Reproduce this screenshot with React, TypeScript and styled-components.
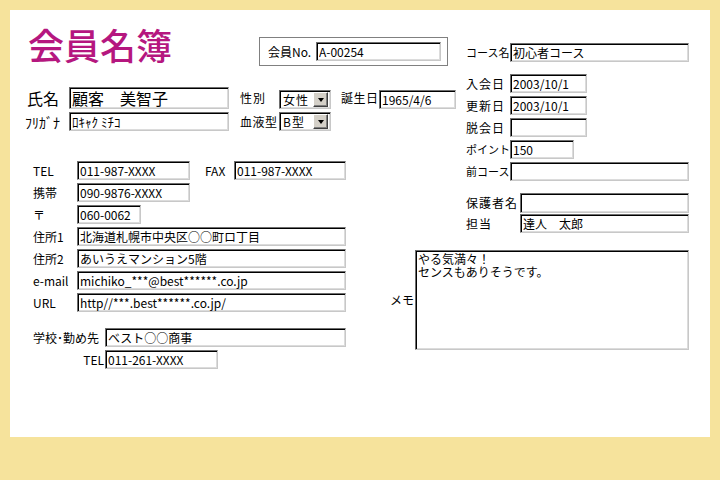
import React from "react";
import styled, { createGlobalStyle, css } from "styled-components";

const GlobalStyle = createGlobalStyle`
  html, body { margin: 0; padding: 0; }
  body {
    background: #f6e39c;
    font-family: "Noto Sans CJK JP", "Liberation Sans", sans-serif;
    font-size: 12px;
    color: #000;
  }
`;

const inset = css`
  box-sizing: border-box;
  border-style: solid;
  border-width: 1px;
  border-color: #6e6e6e #c8c8c8 #c8c8c8 #6e6e6e;
  box-shadow: inset 1px 1px 0 #000, inset -1px -1px 0 #dcdcdc;
  background: #fff;
`;

const Panel = styled.main`
  margin: 10px;
  width: 700px;
  height: 427px;
  background: #fff;
  display: flex;
  flex-direction: column;
`;

const Header = styled.header`
  display: flex;
  align-items: flex-start;
  height: 60px;
  padding-left: 18px;
`;

const Title = styled.h1`
  margin: 16px 0 0;
  width: 231px;
  font-size: 36px;
  line-height: 36px;
  font-weight: 500;
  color: #b5177f;
  letter-spacing: 0;
  white-space: nowrap;
`;

const MemberBox = styled.div`
  margin-top: 27px;
  width: 189px;
  height: 29px;
  box-sizing: border-box;
  border: 1px solid #808080;
  display: flex;
  align-items: center;
  padding-left: 8px;
`;

const CourseField = styled.div`
  margin: 33px 0 0 18px;
  display: flex;
  align-items: center;
`;

const Body = styled.div`
  display: grid;
  grid-template-columns: 370px 86px 244px;
  grid-template-rows: 86px 88px 1fr;
  grid-template-areas:
    "names names dates"
    "contact . dates"
    "contact memo memo";
  flex: 1;
`;

const Area = styled.section<{ $area: string; $pt: number; $pl: number }>`
  grid-area: ${(p) => p.$area};
  padding-top: ${(p) => p.$pt}px;
  padding-left: ${(p) => p.$pl}px;
  display: flex;
  flex-direction: column;
`;

const Row = styled.div<{ $mt?: number; $align?: string }>`
  display: flex;
  align-items: ${(p) => p.$align ?? "center"};
  margin-top: ${(p) => p.$mt ?? 0}px;
`;

const Label = styled.span<{ $w: number; $size?: number; $ls?: number; $right?: boolean; $ml?: number; $pl?: number }>`
  width: ${(p) => p.$w}px;
  flex-shrink: 0;
  box-sizing: border-box;
  margin-left: ${(p) => p.$ml ?? 0}px;
  padding-left: ${(p) => p.$pl ?? 0}px;
  font-size: ${(p) => p.$size ?? 12}px;
  letter-spacing: ${(p) => p.$ls ?? 0}px;
  text-align: ${(p) => (p.$right ? "right" : "left")};
  line-height: 1;
  white-space: nowrap;
  align-self: center;
`;

const TextBox = styled.input<{ $w: number; $h?: number; $size?: number; $ml?: number }>`
  ${inset};
  width: ${(p) => p.$w}px;
  height: ${(p) => p.$h ?? 19}px;
  padding: 0 2px;
  margin: 0 0 0 ${(p) => p.$ml ?? 0}px;
  font-family: "Noto Sans CJK JP", "Liberation Sans", sans-serif;
  font-size: ${(p) => p.$size ?? 12}px;
  color: #000;
  outline: none;
  flex-shrink: 0;
`;

const MemoBox = styled.textarea`
  ${inset};
  width: 274px;
  height: 100px;
  margin: 0;
  padding: 1px 2px;
  resize: none;
  overflow: hidden;
  font-family: "Noto Sans CJK JP", "Liberation Sans", sans-serif;
  font-size: 12px;
  line-height: 13px;
  color: #000;
  outline: none;
`;

const SelectBox = styled.div<{ $w: number }>`
  ${inset};
  width: ${(p) => p.$w}px;
  height: 19px;
  display: flex;
  align-items: center;
  justify-content: space-between;
  padding: 2px 2px 2px 3px;
  font-size: 12px;
  letter-spacing: 1px;
  line-height: 1;
  flex-shrink: 0;
`;

const DropButton = styled.span`
  box-sizing: border-box;
  width: 15px;
  height: 15px;
  background: #d4d0c8;
  border-style: solid;
  border-width: 1px;
  border-color: #fff #404040 #404040 #fff;
  box-shadow: inset -1px -1px 0 #808080;
  display: flex;
  align-items: center;
  justify-content: center;
  &::after {
    content: "";
    width: 0;
    height: 0;
    border-left: 3.5px solid transparent;
    border-right: 3.5px solid transparent;
    border-top: 4px solid #000;
  }
`;

const Select = ({ value, w }: { value: string; w: number }) => (
  <SelectBox $w={w} role="combobox">
    <span>{value}</span>
    <DropButton />
  </SelectBox>
);

const Memo = styled.div`
  display: flex;
  align-items: center;
`;

export default function App() {
  return (
    <>
      <GlobalStyle />
      <Panel>
        <Header>
          <Title>会員名簿</Title>
          <MemberBox>
            <Label $w={48} $size={12}>会員No.</Label>
            <TextBox $w={125} readOnly defaultValue="A-00254" />
          </MemberBox>
          <CourseField>
            <Label $w={44} $size={11}>コース名</Label>
            <TextBox $w={179} readOnly defaultValue="初心者コース" />
          </CourseField>
        </Header>
        <Body>
          <Area $area="names" $pt={17} $pl={15}>
            <Row $align="flex-end">
              <Label $w={44} $size={16} $pl={2}>氏名</Label>
              <TextBox $w={160} $h={22} $size={16} readOnly defaultValue="顧客　美智子" />
              <Label $w={39} $ml={11} $ls={1}>性別</Label>
              <Select value="女性" w={52} />
              <Label $w={38} $ml={10} $ls={0.5}>誕生日</Label>
              <TextBox $w={77} readOnly defaultValue="1965/4/6" />
            </Row>
            <Row $mt={3}>
              <Label $w={44} $size={14}>ﾌﾘｶﾞﾅ</Label>
              <TextBox $w={160} $size={13} readOnly defaultValue="ﾛｷｬｸ ﾐﾁｺ" />
              <Label $w={39} $ml={11} $ls={0.5}>血液型</Label>
              <Select value="B型" w={52} />
            </Row>
          </Area>
          <Area $area="dates" $pt={4} $pl={0}>
            <Row>
              <Label $w={44} $ls={1}>入会日</Label>
              <TextBox $w={77} readOnly defaultValue="2003/10/1" />
            </Row>
            <Row $mt={3}>
              <Label $w={44} $ls={1}>更新日</Label>
              <TextBox $w={77} readOnly defaultValue="2003/10/1" />
            </Row>
            <Row $mt={3}>
              <Label $w={44} $ls={1}>脱会日</Label>
              <TextBox $w={77} readOnly defaultValue="" />
            </Row>
            <Row $mt={3}>
              <Label $w={44} $size={11}>ポイント</Label>
              <TextBox $w={64} readOnly defaultValue="150" />
            </Row>
            <Row $mt={3}>
              <Label $w={44} $size={11}>前コース</Label>
              <TextBox $w={179} readOnly defaultValue="" />
            </Row>
            <Row $mt={12}>
              <Label $w={54} $ls={1}>保護者名</Label>
              <TextBox $w={169} $h={20} readOnly defaultValue="" />
            </Row>
            <Row $mt={1}>
              <Label $w={54} $ls={1}>担当</Label>
              <TextBox $w={169} readOnly defaultValue="達人　太郎" />
            </Row>
          </Area>
          <Area $area="contact" $pt={5} $pl={23}>
            <Row>
              <Label $w={44}>TEL</Label>
              <TextBox $w={113} readOnly defaultValue="011-987-XXXX" />
              <Label $w={29} $ml={15}>FAX</Label>
              <TextBox $w={112} readOnly defaultValue="011-987-XXXX" />
            </Row>
            <Row $mt={3}>
              <Label $w={44}>携帯</Label>
              <TextBox $w={113} readOnly defaultValue="090-9876-XXXX" />
            </Row>
            <Row $mt={3}>
              <Label $w={44}>〒</Label>
              <TextBox $w={64} readOnly defaultValue="060-0062" />
            </Row>
            <Row $mt={3}>
              <Label $w={44}>住所1</Label>
              <TextBox $w={269} readOnly defaultValue="北海道札幌市中央区○○町ロ丁目" />
            </Row>
            <Row $mt={3}>
              <Label $w={44}>住所2</Label>
              <TextBox $w={269} readOnly defaultValue="あいうえマンション5階" />
            </Row>
            <Row $mt={3}>
              <Label $w={44}>e-mail</Label>
              <TextBox $w={269} readOnly defaultValue="michiko_***@best******.co.jp" />
            </Row>
            <Row $mt={3}>
              <Label $w={44}>URL</Label>
              <TextBox $w={269} readOnly defaultValue="http//***.best******.co.jp/" />
            </Row>
            <Row $mt={16}>
              <Label $w={72}>学校･勤め先</Label>
              <TextBox $w={241} readOnly defaultValue="ベスト○○商事" />
            </Row>
            <Row $mt={3}>
              <Label $w={71} $right>TEL</Label>
              <TextBox $w={113} $ml={1} readOnly defaultValue="011-261-XXXX" />
            </Row>
          </Area>
          <Area $area="memo" $pt={6} $pl={10}>
            <Memo>
              <Label $w={25}>メモ</Label>
              <MemoBox readOnly defaultValue={"やる気満々！\nセンスもありそうです。"} />
            </Memo>
          </Area>
        </Body>
      </Panel>
    </>
  );
}
